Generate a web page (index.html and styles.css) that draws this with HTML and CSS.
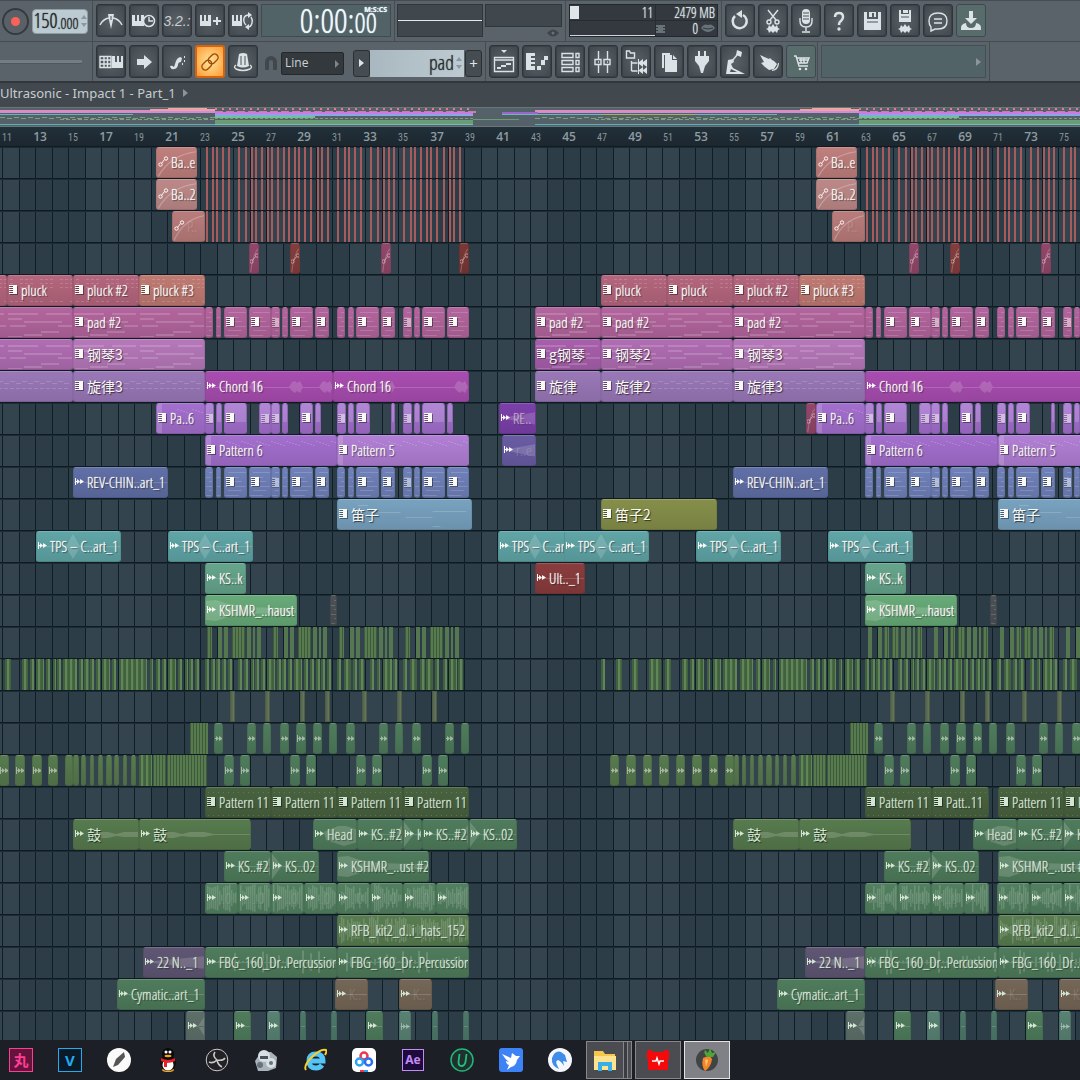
FILE: index.html
```html
<!DOCTYPE html>
<html lang="en">
<head>
<meta charset="utf-8">
<title>Playlist</title>
<link rel="stylesheet" href="styles.css">
</head>
<body>
<svg class="defs" aria-hidden="true">
  <symbol id="midi" viewBox="0 0 9 10"><path fill="#0006" d="M1 1h8v9H1z"/><path fill="currentColor" d="M0 0h8v9H0V8h4V7H0V6h4V5H0V4h4V3H0V2h4V1H0z"/></symbol>
  <symbol id="audio" viewBox="0 0 9 8"><path fill="currentColor" d="M0 0h1v3h1V1l3 2.500L2 6V4H1v3H0zM5 1l4 2.500L5 6z"/></symbol>
  <symbol id="auto" viewBox="0 0 11 11"><path fill="none" stroke="currentColor" d="M3.500 7.500l3-4"/><circle cx="2.500" cy="8.500" r="1.700" fill="none" stroke="currentColor"/><circle cx="8" cy="2.500" r="1.700" fill="none" stroke="currentColor"/></symbol>
</svg>

<header class="toolbar">
  <div class="bar">
    <div class="panel panel-left">
      <button class="record" aria-label="Record"><span class="record-dot"></span></button>
      <output class="tempo" aria-label="Tempo">150<small>.000</small><svg class="spin" viewBox="0 0 6 14"><path d="M3 1l3 4H0zM3 13l3-4H0z"/></svg></output>
    </div>
    <div class="panel">
      <button class="tool" aria-label="Metronome"><svg viewBox="0 0 24 24"><path class="line" d="M1 16q3-6 9-7M23 16q-3-6-9-7"/><path d="M9 5h6l-1 6-2 9-2-9z"/><path class="dark" d="M12 7v4"/></svg></button>
      <button class="tool" aria-label="Wait for input"><svg viewBox="0 0 24 24"><path d="M0 6h3v6h2V6h2v6h2V6h3v11H0z"/><circle class="hole" cx="17" cy="12" r="5.500"/><path class="line" d="M17 8v4h4"/></svg></button>
      <button class="tool tool-count" aria-label="Countdown">3.2.:</button>
      <button class="tool" aria-label="Blend notes"><svg viewBox="0 0 24 24"><path d="M2 6h2v6h2V6h2v6h2V6h3v11H2zM18 8h2v3h3v2h-3v3h-2v-3h-3v-2h3z"/></svg></button>
      <button class="tool" aria-label="Loop record"><svg viewBox="0 0 24 24"><path d="M1 6h2v6h2V6h2v6h2V6h2v11H1zM17 3v6l4-3zM18 21v-6l-4 3z"/><path class="line" d="M18 6q-4 0-5 3-1 4 2 7M20 8q2 3 1 6-1 4-4 4"/></svg></button>
      <div class="clock"><span class="clock-unit">M:S:CS</span><span>0:00:</span><span class="clock-cs">00</span></div>
    </div>
    <div class="panel panel-scopes">
      <div class="scope"></div>
      <div class="scope-side"><div class="scope-small"></div><svg class="eye" viewBox="0 0 12 8"><path d="M0 4q6-7 12 0-6 7-12 0z"/><circle cx="6" cy="4" r="1.500" fill="#667077"/></svg></div>
    </div>
    <div class="panel panel-cpu">
      <div class="monitor">
        <div class="monitor-cell cpu"><span class="cpu-level"></span><span>11</span></div>
        <div class="monitor-cell">2479 MB</div>
        <div class="monitor-cell graph"></div>
        <div class="monitor-cell"><svg class="chip" viewBox="0 0 9 8"><path d="M0 0h9v2H0zM0 3h9v2H0zM0 6h9v2H0zM2 0h5v8H2z"/></svg>0<svg class="lips" viewBox="0 0 14 9"><path d="M0 4q3-5 7-3 4-2 7 3-7 8-14 0z"/><path class="slot" d="M2 4q5 2 10 0"/></svg></div>
      </div>
    </div>
    <div class="panel panel-open">
      <button class="tool" aria-label="Undo"><svg viewBox="0 0 24 24"><path class="thick" d="M7 7a7 7 0 1 0 8-1"/><path d="M14 1v8L8 5z"/></svg></button>
      <button class="tool" aria-label="Cut"><svg viewBox="0 0 24 24"><path class="line" d="M7 1l8 10M17 1L9 11"/><circle class="line" cx="8" cy="13" r="2"/><circle class="line" cx="16" cy="13" r="2"/><path d="M5 20l2-1 1-3 2 2 2-3 2 3 2-2 1 3 2 1-2 1-1 3-2-2-2 2-2-2-2 2-1-3z"/></svg></button>
      <button class="tool" aria-label="Audio recording"><svg viewBox="0 0 24 24"><rect x="8" y="0" width="8" height="15" rx="4"/><path class="line" d="M6 9v3q0 6 6 6t6-6V9M12 18v4M8 23h8"/><path class="dark" d="M9 4h6M9 7h6M9 10h6"/></svg></button>
      <button class="tool" aria-label="Help"><svg viewBox="0 0 24 24"><path class="thick" d="M8 8q0-4 4-4t4 4q0 2-2 4-2 1-2 4"/><circle cx="12" cy="20" r="1.700"/></svg></button>
      <button class="tool" aria-label="Save"><svg viewBox="0 0 24 24"><path d="M4 3h3v7h11V3h3v18H4z"/><path d="M9 3h7v5h-2V4h-2v4H9z"/><path class="dark" d="M7 13h11"/></svg></button>
      <button class="tool" aria-label="Save as wave"><svg viewBox="0 0 24 24"><path d="M6 1h2v4h8V1h2v12H6zM10 1h5v3h-5z"/><path class="dark" d="M8 8h8"/><path d="M5 20l2-1 1-3 2 2 2-3 2 3 2-2 1 3 2 1-2 1-1 3-2-2-2 2-2-2-2 2-1-3z"/></svg></button>
      <button class="tool" aria-label="Messages"><svg viewBox="0 0 24 24"><path class="line" d="M5 18q-2-2-2-6 0-8 9-8t9 8-9 8h-3l-4 2zM8 10h8M8 14h8"/></svg></button>
      <button class="tool tool-teal" aria-label="Download"><svg viewBox="0 0 24 24"><path d="M10 2h4v7h4l-6 6-6-6h4zM2 21q-1-6 5-7 0 5 5 5t5-5q6 1 5 7z"/></svg></button>
    </div>
  </div>
  <div class="bar">
    <div class="panel panel-left panel-pitch"><label class="pitch"><span class="sr">Position</span><input type="range" class="pitch-range"></label></div>
    <div class="panel">
      <button class="tool" aria-label="Typing keyboard"><svg viewBox="0 0 24 24"><path class="line" d="M1 6.500h11v11H1zM1 10h11M1 14h11M5 7v10M8.500 7v10"/><path d="M14 6h2v6h2V6h2v6h2V6h2v12H13V6z"/></svg></button>
      <button class="tool" aria-label="Step edit"><svg viewBox="0 0 24 24"><path d="M5 9h7V5l8 7-8 7v-4H5z"/></svg></button>
      <button class="tool" aria-label="Note slide"><svg viewBox="0 0 24 24"><path d="M5 16q2-1 4 1l2-6q1-3 4-4l2 1-1 4q-3 0-3 3-1 4-4 4-3 1-4-3zM19 6h1v2h-1zM19 10h1v2h-1zM17 13h1v2h-1z"/></svg></button>
      <button class="tool tool-on" aria-label="Link"><svg viewBox="0 0 24 24"><g transform="rotate(-45 12 12)"><rect class="line" x="2" y="8.500" width="11" height="7" rx="3.500"/><rect class="line" x="11" y="8.500" width="11" height="7" rx="3.500"/></g></svg></button>
      <button class="tool" aria-label="Multilink"><svg viewBox="0 0 24 24"><path d="M8 4q4-2 8 0l2 12q-6 3-12 0z"/><path class="line" d="M5 15q-3 2 0 4 7 3 14 0 3-2 0-4"/><path class="dark" d="M10 6v9M14 6v9"/></svg></button>
      <svg class="magnet" viewBox="0 0 12 14"><path d="M0 14V6a6 6 0 0 1 12 0v8H8V6a2 2 0 0 0-4 0v8z"/></svg>
      <label class="snap"><span class="sr">Snap</span><select class="snap-select"><option>Line</option></select><span class="snap-arrow"></span></label>
      <button class="pattern-side" aria-label="Pattern menu"><span class="tri"></span></button>
      <button class="pattern-name">pad<svg class="spin" viewBox="0 0 6 14"><path d="M3 1l3 4H0zM3 13l3-4H0z"/></svg></button>
      <button class="pattern-side" aria-label="Add pattern">+</button>
    </div>
    <div class="panel panel-windows">
      <button class="tool" aria-label="Playlist"><svg viewBox="0 0 24 24"><path d="M9 0h6l-3 3z"/><path class="line" d="M2.500 7.500h19v14h-19zM3 10h18"/><path d="M5 17h4v2H5zM9 15h5v2H9zM14 13h5v2h-5z"/></svg></button>
      <button class="tool" aria-label="Piano roll"><svg viewBox="0 0 24 24"><path d="M1 3h9v3H6v2h4v2H6v2h4v2H6v2h4v4H1zM12 16h4v4h-4zM16 10h4v5h-4zM19 6h4v4h-4z"/></svg></button>
      <button class="tool" aria-label="Channel rack"><svg viewBox="0 0 24 24"><path class="line" d="M4 3.500h11v4H4zM4 10.500h11v4H4zM4 17.500h11v4H4zM18 3.500h3v4h-3zM18 10.500h3v4h-3zM18 17.500h3v4h-3z"/></svg></button>
      <button class="tool" aria-label="Mixer"><svg viewBox="0 0 24 24"><path class="line" d="M7.500 1v8M7.500 15v8M16.500 1v8M16.500 15v8M4 9.500h6v5H4zM13 9.500h6v5h-6zM7 12h1M16 12h1"/></svg></button>
      <button class="tool" aria-label="Browser"><svg viewBox="0 0 24 24"><path class="line" d="M2.500 1v7h8V3h-4l-1-2zM7.500 11v10M7.500 13h6M7.500 21h6"/><path d="M14 9h1v3l4-3v3l4-3v8l-4-3v3l-4-3v3h-1zM14 17h1v3l4-3v3l4-3v7l-4-3v3l-4-3v3h-1z"/></svg></button>
      <button class="tool" aria-label="Project"><svg viewBox="0 0 24 24"><path d="M5 3h8v2H7v13H5z"/><path d="M8 5h7v5h5v12H8zM16 5l4 4h-4z"/></svg></button>
      <button class="tool" aria-label="Plugins"><svg viewBox="0 0 24 24"><path d="M8 1h2v5h4V1h2v5h3v5l-4 5-2 7h-2l-2-7-4-5V6h3z"/></svg></button>
      <button class="tool" aria-label="Tools"><svg viewBox="0 0 24 24"><path d="M14 0l5 2-1 5-5-2zM5 10l5-1 1 3-3 2 2 4 12 6H3zM8 19l-1 3h7z" fill-rule="evenodd"/><path class="line" d="M14 5l-5 6"/></svg></button>
      <button class="tool" aria-label="Touch"><svg viewBox="0 0 24 24"><path d="M4 5l9 4 1-1 2 2 2 1 3 3-3 5-5 1-4-3-4-4 3-1zM16 20q5-1 6-7h1q0 7-7 8z"/></svg></button>
      <button class="tool tool-teal" aria-label="Shop"><svg viewBox="0 0 24 24"><path class="line" d="M5 6h2l3 10h9M8 8h12l-2 5H9M10 10h9M12 8v5M15 8v5"/><circle cx="11" cy="19" r="1.300"/><circle cx="17" cy="19" r="1.300"/></svg></button>
    </div>
    <div class="panel"><button class="news" aria-label="News"><span class="tri"></span></button></div>
  </div>
</header>

<div class="hint">Ultrasonic - Impact 1 - Part_1<span class="tri"></span></div>
<div class="overview"><svg id="overview"></svg></div>
<div class="ruler" id="ruler"></div>
<main class="playlist" id="playlist"></main>

<footer class="taskbar">
  <button class="app" aria-label="Wan"><span class="badge badge-pink">丸</span></button>
  <button class="app" aria-label="Vegas"><span class="badge badge-blue">V</span></button>
  <button class="app" aria-label="Notes"><svg viewBox="0 0 24 24"><circle cx="12" cy="12" r="12" fill="#fafafa"/><path d="M6 19l3-8 8-7 1 5-7 8z" fill="#555"/></svg></button>
  <button class="app" aria-label="QQ"><svg viewBox="0 0 24 24"><ellipse cx="12" cy="22" rx="6" ry="2" fill="#f6a21c"/><ellipse cx="12" cy="15" rx="8" ry="8" fill="#111"/><ellipse cx="12" cy="17" rx="5.500" ry="5.500" fill="#fff"/><ellipse cx="12" cy="6" rx="6" ry="6" fill="#0a0a0a"/><circle cx="10" cy="4" r="1.500" fill="#fff"/><circle cx="14" cy="4" r="1.500" fill="#fff"/><ellipse cx="12" cy="8" rx="3.500" ry="1.200" fill="#f6a21c"/><path d="M5 10q7 4 14 0v3q-4 2-8 2v4H8v-5l-3-1z" fill="#e8202a"/></svg></button>
  <button class="app" aria-label="OBS"><svg viewBox="0 0 24 24"><circle cx="12" cy="12" r="10.800" fill="#222226" stroke="#c8c8c8"/><path fill="none" stroke="#c8c8c8" stroke-width="1.600" d="M10 4q-3 4 2 8 6 1 8-2M12 12q-4 4-8 2M12 12q1 5 5 7"/></svg></button>
  <button class="app" aria-label="Robot"><svg viewBox="0 0 24 24"><path d="M1 13l6-9h10l6 5-1 11-8 3H4z" fill="#a9b3bb"/><circle cx="10" cy="8" r="6" fill="#d9e0e4"/><path d="M6 8h8v3H6z" fill="#4a545c"/><circle cx="17" cy="15" r="5" fill="#d9e0e4"/><circle cx="17" cy="15" r="2" fill="#66727c"/><circle cx="6" cy="17" r="3" fill="#66727c"/></svg></button>
  <button class="app" aria-label="Internet Explorer"><svg viewBox="0 0 24 24"><path fill="none" stroke="#54c4f4" stroke-width="5" d="M5 13h15q0-7-7-7t-7 7 7 7q4 0 6-3"/><path fill="none" stroke="#f7cf2f" stroke-width="2" d="M3 22q-3-4 6-13T23 2q1 2-1 5"/></svg></button>
  <button class="app" aria-label="Cloud drive"><svg viewBox="0 0 24 24"><rect width="24" height="24" rx="5" fill="#fff"/><g fill="none" stroke-width="2.500"><circle cx="12" cy="8" r="3.500" stroke="#f0364b"/><circle cx="7.500" cy="14" r="3.500" stroke="#2aa3f5"/><circle cx="16.500" cy="14" r="3.500" stroke="#2a70f5"/></g><path d="M8 22h4v2H8z" fill="#f0364b"/><path d="M12 22h4v2h-4z" fill="#2a9af5"/></svg></button>
  <button class="app" aria-label="After Effects"><span class="badge badge-ae">Ae</span></button>
  <button class="app" aria-label="Uninstaller"><svg viewBox="0 0 24 24"><circle cx="12" cy="12" r="11" fill="#20302f" stroke="#20b877" stroke-width="1.500"/><path fill="none" stroke="#20c07c" stroke-width="1.800" d="M9.500 6l-1 8q0 4 3 4t4-4l1-8"/></svg></button>
  <button class="app" aria-label="Bird"><svg viewBox="0 0 24 24"><rect width="24" height="24" rx="3" fill="#3d83f5"/><path fill="#fff" d="M3 6l9 4 1-5 4 3 4 0-3 4q-1 6-6 7l-4 3 2-5q-3-1-3-4l3 1q-4-3-7-8z"/></svg></button>
  <button class="app" aria-label="Thunder"><svg viewBox="0 0 24 24"><circle cx="12" cy="12" r="12" fill="#f4f7fb"/><path fill="#3f8de8" d="M4 10Q7 2 13 4l4 3 2 7-4-1 1 5q-3-5-6-6-3 1-1 5l2 4Q3 18 4 10z"/></svg></button>
  <button class="app app-open app-stack" aria-label="Explorer"><svg viewBox="0 0 24 24"><path d="M1 3h9l2 3h10v16H1z" fill="#f5c84c"/><path d="M1 8h22v14H1z" fill="#fde28f"/><path d="M5 14h14v9h-4v-5H9v5H5z" fill="#35aeea"/></svg></button>
  <button class="app app-open" aria-label="Heart"><svg viewBox="0 0 24 24"><path d="M1 3q4-3 6 1h10q2-4 6-1v7l-1 3v9H2v-9l-1-3z" fill="#f40a0a"/><path d="M6 13h4l1-3 2 6 1-3h4" fill="none" stroke="#fff" stroke-width="1.500"/></svg></button>
  <button class="app app-open app-active" aria-label="FL Studio"><svg viewBox="0 0 24 24"><circle cx="12" cy="12" r="11" fill="#3f4444"/><path d="M8 10q7-4 9 1-1 8-7 12-4-5-2-13z" fill="#f5842a"/><path d="M10 12q3-2 3 1l-2 6z" fill="#ffc06a"/><path d="M12 9Q8 5 10 2l3 3 2-5 2 5 4-1-3 5z" fill="#4ea53a"/></svg></button>
</footer>
<script src="script.js"></script>
</body>
</html>
```

FILE: styles.css
```css
* { box-sizing: border-box; }
body {
  margin: 0;
  min-height: 100vh;
  display: flex;
  flex-direction: column;
  overflow-x: hidden;
  background: #1d1f26;
  color: #dfe6e9;
  font: 12px/16px "Noto Sans", "Noto Sans CJK SC", sans-serif;
}
button { margin: 0; padding: 0; border: 0; font: inherit; color: inherit; background: none; }
.defs { position: absolute; width: 0; height: 0; }
.sr { position: absolute; width: 1px; height: 1px; overflow: hidden; opacity: 0; }

/* toolbar */
.toolbar { background: #5a636a; border-top: 1px solid #454c52; border-bottom: 2px solid #31373c; }
.bar { display: flex; height: 41px; overflow: hidden; border-bottom: 1px solid #454c52; }
.bar:last-child { height: 39px; border-bottom: 0; }
.panel { display: flex; flex: none; gap: 3px; padding: 3px 3px 0; border-right: 1px solid #454c52; }
.panel-left { width: 93px; padding: 0 4px 0 2px; align-items: center; }
.panel-open { border-right: 0; }
.panel-windows { padding-right: 1px; }
.tool {
  width: 30px; height: 33px; flex: none;
  display: grid; place-items: center;
  border: 1px solid #2f3539; border-radius: 3px;
  background: radial-gradient(#596167, #40474c);
  box-shadow: inset 0 0 0 1px #3a4146;
}
.tool svg { width: 24px; height: 24px; fill: #dce3e6; }
.tool svg .line { fill: none; stroke: #dce3e6; stroke-width: 1.400; }
.tool svg .thick { fill: none; stroke: #dce3e6; stroke-width: 2.500; }
.tool svg .hole { fill: #4c545a; stroke: #dce3e6; stroke-width: 1.500; }
.tool svg .dark { fill: none; stroke: #4c545a; }
.tool-count { font: italic 14px/20px "Liberation Sans", sans-serif; color: #c9d0d3; }
.tool-teal { background: #586c6c; border-color: #3c4a4d; box-shadow: none; }
.tool-on { background: radial-gradient(#ffe79b, #ff9a35); border: 2px solid #d8630f; box-shadow: none; }
.tool-on svg .line { stroke: #a04a08; }
.record { width: 27px; height: 27px; flex: none; display: grid; place-items: center; border: 2px solid #343a3f; border-radius: 50%; background: #596167; }
.record-dot { width: 9px; height: 9px; border-radius: 50%; background: #f9625b; }
.tempo {
  display: flex; align-items: center; justify-content: center; width: 56px; height: 25px;
  border: 1px solid #8e9ca3; border-radius: 4px; background: #bccad1; color: #26292c;
  font: 20px/24px "Open Sans Condensed Light", "Roboto Condensed", sans-serif;
  text-shadow: 0 0 1px;
}
.tempo small { font-size: 15px; padding-top: 3px; }
.spin { width: 6px; height: 14px; margin-left: 2px; fill: #8a979d; }
.clock {
  position: relative; width: 130px; height: 33px; padding: 0 13px 2px 0;
  display: flex; align-items: center; justify-content: flex-end;
  border: 1px solid #3e4b4f; background: #516367; color: #eef8fa;
  font: 34px/32px "Open Sans Condensed Light", "Roboto Condensed", sans-serif;
  text-shadow: 0 0 1px;
}
.clock-cs { font-size: 28px; line-height: 26px; padding-top: 5px; }
.clock-unit { position: absolute; right: 3px; top: 1px; font: bold 7px/8px "Open Sans", sans-serif; }
.panel-scopes { gap: 2px; padding-left: 2px; }
.scope { width: 86px; height: 33px; border: 1px solid #30363a; background: linear-gradient(#e3e8ea, #e3e8ea) 0 15px / 100% 1px no-repeat #40474d; }
.scope-small { width: 77px; height: 23px; border: 1px solid #30363a; background: #40474d; }
.scope-side { display: flex; flex-direction: column; align-items: flex-end; gap: 2px; }
.eye { width: 12px; height: 8px; margin-right: 3px; fill: #3d454b; }
.monitor {
  width: 149px; height: 33px; display: grid; grid-template: 15px 15px / 85px 1fr; gap: 1px;
  border: 1px solid #23282b; background: #262c30;
  font: 14px/15px "Open Sans Condensed Light", "Roboto Condensed", sans-serif;
  text-shadow: 0 0 1px;
}
.monitor-cell { display: flex; align-items: center; justify-content: flex-end; gap: 3px; padding-right: 2px; background: #33393e; }
.cpu { justify-content: space-between; }
.cpu-level { width: 9px; height: 13px; background: #dfe5e8; }
.graph { border-bottom: 1px solid #cfd6d9; }
.chip { width: 9px; height: 8px; margin-right: auto; fill: #687279; }
.lips { width: 14px; height: 9px; fill: #687279; }
.slot { fill: none; stroke: #33393e; }
.pitch { width: 84px; margin-left: -2px; display: flex; }
.pitch-range { appearance: none; width: 82px; height: 4px; margin: 0; background: #747d84; border-bottom: 1px solid #4e575d; }
.pitch-range::-webkit-slider-thumb { appearance: none; width: 0; height: 0; }
.magnet { width: 12px; height: 14px; align-self: center; margin-left: 4px; fill: #41484d; }
.snap { position: relative; align-self: center; margin: 0 6px 0 1px; }
.snap-select {
  appearance: none; display: block; width: 63px; height: 23px; padding: 0 3px;
  border: 1px solid #24282b; border-radius: 2px; background: #33393d; color: #cbd2d5; font: 12px/20px "Open Sans", sans-serif;
}
.snap-arrow { position: absolute; right: 5px; top: 8px; border: 4px solid transparent; border-left-color: #7d868b; border-right: 0; }
.tri { border: 4px solid transparent; border-left: 5px solid #8b959a; border-right: 0; }
.pattern-side { width: 17px; height: 27px; align-self: center; display: grid; place-items: center; border: 1px solid #2b3034; border-radius: 3px; background: #454c52; font-size: 15px; }
.pattern-side .tri { border-left-color: #dfe5e8; }
.pattern-name {
  width: 94px; height: 27px; align-self: center; margin: 0 -2px 0 -3px; padding-right: 2px;
  display: flex; align-items: center; justify-content: flex-end;
  background: linear-gradient(90deg, #a9b8c0, #bdcad1); color: #2a2d30;
  font: 20px/24px "Open Sans Condensed Light", "Roboto Condensed", sans-serif;
  text-shadow: 0 0 1px;
}
.news { width: 165px; height: 33px; padding-right: 4px; display: flex; align-items: center; justify-content: flex-end; border: 1px solid #425054; background: #516367; }

/* hint, overview and ruler */
.hint { display: flex; align-items: center; gap: 7px; height: 24px; padding-bottom: 4px; background: #41484e; color: #c6cdd0; font-size: 13px; }
.overview { height: 20px; border: solid #6a757b; border-width: 1px 0; background: #556168; overflow: hidden; }
.overview svg { display: block; width: 100%; height: 18px; }
.ruler { position: relative; height: 19px; overflow: hidden; background: linear-gradient(#223039, #1c272f); color: #87949a; }
.mark { position: absolute; top: 3px; width: 30px; margin-left: -15px; text-align: center; font: 10px/16px "Roboto Condensed", sans-serif; }
.mark-major { top: 2px; font: 600 12px/16px "Open Sans", sans-serif; color: #8f9ca2; }

/* playlist */
.playlist {
  position: relative; flex: 1 0 auto; overflow: hidden;
  background:
    linear-gradient(#0f1b23 0 1px, #1d2b35 0 2px, transparent 0) 0 0 / 100% 32px,
    linear-gradient(90deg, #0f1d26 0 1px, transparent 0 17px, #0f1d26 0 18px, transparent 0) 2px 0 / 33px 100%,
    linear-gradient(90deg, #2d3d48 0 66px, #34444e 0) 19px 0 / 132px 100%;
}
.track { position: relative; height: 32px; overflow: hidden; }
.track:last-child { height: 30px; }
.clip {
  position: absolute; top: 1px; height: 31px; overflow: hidden;
  display: flex; align-items: center; gap: 3px; padding: 0 1px 2px;
  border: 1px solid; border-radius: 3px;
  color: #f8f8f5; white-space: nowrap;
  font: 14px/28px "Open Sans Condensed Light", "Roboto Condensed", "Noto Sans CJK SC", sans-serif;
  text-shadow: 0 0 1px, 1px 1px 1px #0009;
}
.clip-auto { gap: 2px; }
.clip-dim { color: #d3e6d4; }
.clip-tiny { padding: 0; justify-content: center; }
.clip .icon { position: relative; flex: none; width: 9px; height: 10px; }
.clip-auto .icon { width: 11px; height: 11px; }
.clip .label { position: relative; font-size: 15px; }
.clip .cjk { font: 14px/28px "Noto Sans CJK SC", sans-serif; text-shadow: 1px 1px 1px #0009; }
.clip .faint { opacity: 0.150; }
.clip .soft { opacity: 0.500; }
.clip-tiny .icon { opacity: 0.500; }
.art { position: absolute; left: 0; top: 0; width: 100%; height: 100%; }
.stripe { position: absolute; top: 1px; height: 31px; }
.stripe-red { background: #a65c5c; }
.stripe-hat { background: #55774f; }
.stripe-fine { background: repeating-linear-gradient(90deg, #3d5a3b 0 1px, #577a4f 0 3px); }
.stripe-kick { background: repeating-linear-gradient(90deg, #41603e 0 2px, #5f8558 0 4px, #48693f 0 5px); }
.stripe-olive { background: linear-gradient(90deg, #546351, #65785b); border: 1px solid #4f5d42; }

/* taskbar */
.taskbar { display: flex; flex: none; gap: 3px; height: 40px; padding: 1px 0; margin-left: -2px; background: #1d1f26; }
.app { width: 46px; height: 38px; flex: none; display: grid; place-items: center; }
.app svg { width: 24px; height: 24px; }
.app-open { border: 1px solid #85878b; background: #4b4c52; }
.app-stack { box-shadow: inset -3px 0 #4b4c52, inset -4px 0 #85878b, inset -7px 0 #3b3c42, inset -8px 0 #85878b; padding-right: 8px; }
.app-active { background: #808187; border-color: #e2e2e4; }
.badge { width: 24px; height: 24px; display: grid; place-items: center; border: 1px solid; font: bold 15px/20px "Noto Sans", "Noto Sans CJK SC", sans-serif; }
.badge-pink { background: #64143c; color: #ff3d94; }
.badge-blue { background: #0a1a26; color: #25a9ef; }
.badge-ae { width: 22px; height: 22px; background: #1f0a3c; color: #c08cf5; font-size: 12px; }
```

FILE: script.js
```js
const SVG = 'http://www.w3.org/2000/svg';
const playlist = document.getElementById('playlist');
const tracks = [];
for (let i = 0; i < 28; i++) {
  const t = document.createElement('div');
  t.className = 'track';
  playlist.append(t);
  tracks.push(t);
}

// small repeatable generator, so that every clip keeps the same artwork
function noise(seed) {
  let s = seed * 7919 + 17;
  return () => (s = (s * 16807) % 2147483647) / 2147483647;
}

const ART = {
  pad(w) {
    let d = '';
    for (let x = 0; x < w; x += 66) {
      [[0, 5, 30], [38, 5, 24], [0, 10, 14], [16, 13, 38], [2, 17, 16], [33, 23, 18], [50, 17, 14], [16, 26, 18], [0, 28, 14]]
        .forEach(([a, y, l]) => { const n = Math.min(l, w - x - a); if (n > 0) d += `M${x + a} ${y}h${n}v2h-${n}z`; });
    }
    return d;
  },
  chop(w) {
    return [4, 9, 13, 18, 22, 27].map((y, i) => `M${i % 2 ? 0 : 3} ${y}h${w * (i % 3 ? 0.6 : 0.9)}v1H${i % 2 ? 0 : 3}z`).join('');
  },
  bright(w) { return `M0 0h${w}v18H0z`; },
  pluck(w) {
    let d = '';
    for (let x = 2; x < w - 2; x += 5) for (const y of [3, 7, 11, 25]) if ((x * 3 + y) % 4) d += `M${x} ${y}h3v1h-3z`;
    return d;
  },
  melody(w) {
    let d = '';
    for (let x = 50; x < w - 4; x += 6) d += `M${x} ${9 + (x * 5) % 4}h5v1h-5zM${x} ${14 + (x * 7) % 3}h4v1h-4z`;
    return d;
  },
  notes(w) {
    let d = 'M0 0h5v30H0z';
    for (let x = 14; x < w - 2; x += 3) d += `M${x} ${5 + (x * 7) % 5}h2v1h-2z`;
    return d;
  },
  flute(w) {
    return `M${w * 0.3} 12h22v1h-22zM${w * 0.5} 17h${w * 0.2}v1h-${w * 0.2}zM${w * 0.7} 11h${w * 0.25}v1h-${w * 0.25}zM20 5h10v1h-10zM${w * 0.7} 26h8v1h-8z`;
  },
  line(w) { return `M0 14h${w}v1H0z`; },
  burst(w) { return `M0 14h29l7-12 7 12h${w}v1H43l-7 12-7-12H0z`; },
  blobs(w) {
    let d = `M0 15h${w}v1H0z`;
    for (const c of [50, 90, 120]) d += `M${c - 7} 15l3-5 3-1 2 2 3-2 3 6-3 6-3-2-2 2-3-2z`;
    return d;
  },
  blobsLate(w) {
    let d = `M0 15h${w}v1H0z`;
    for (const c of [54, 127]) d += `M${c - 7} 15l3-5 3-1 2 2 3-2 3 6-3 6-3-2-2 2-3-2z`;
    return d;
  },
  fall(w) { return `M0 5l10-1 12 4 20 3 ${w} 3v2L42 18l-20 3-12 4-10-1z`; },
  rise(w) { return `M0 14L${w} 8v13z`; },
  coneIn(w) { return `M0 2l10 12L0 27zM0 14h${w}v1H0z`; },
  coneOut(w) { return `M${w} 2L${w - 8} 14l8 13zM0 14h${w}v1H0z`; },
  head() { return `M10 12l14-6h8l12 4v12l-14 4-18-6z`; },
  drum(w) { return `M24 12h10l8 2 8-2h14l10 2h${w}v1H74l-10 2H50l-8-1-8 2H24z`; },
  dense(w, r) {
    let d = '';
    for (let x = 1; x < w; x += 2) { const h = 3 + r() * 11; d += `M${x} ${14 - h}h1.500v${2 * h}h-1.500z`; }
    return d;
  },
  perc(w, r) {
    let d = `M0 14h${w}v1H0z`;
    for (let x = 4; x < w; x += 4) { const h = r() ** 3 * 12 + 1; d += `M${x} ${14 - h}h2v${2 * h}h-2z`; }
    return d;
  },
  steps(w) {
    let d = '';
    for (let x = 2; x < w; x += 5) d += `M${x} 4h1v1h-1zM${x} 27h1v1h-1z`;
    return d;
  },
  curve(w) { return `M0 29Q${w / 3} 5 ${w} 3v1Q${w / 3} 7 1 30z`; }
};

let count = 0;
function clip(row, x, end, color, icon, text, art, tone) {
  const w = end - x;
  const el = document.createElement('div');
  el.className = 'clip clip-' + icon + (w < 13 ? ' clip-tiny' : '') + (row > 19 ? ' clip-dim' : '');
  el.style.left = x + 'px';
  el.style.width = w + 'px';
  el.style.background = `linear-gradient(${color}, color-mix(in srgb, ${color} 90%, #000))`;
  el.style.borderColor = `color-mix(in srgb, ${color} 84%, #fff) color-mix(in srgb, ${color} 88%, #000) color-mix(in srgb, ${color} 80%, #000)`;
  if (art) {
    const alpha = art === 'curve' ? 0.25 : 0.16;
    el.innerHTML = `<svg class="art"><path fill="#fff" fill-opacity="${alpha}" d="${ART[art](w, noise(++count))}"/></svg>`;
  }
  if (icon !== 'none' && w > 8) {
    el.innerHTML += `<svg class="icon"><use href="#${icon}"/></svg>`;
  }
  if (text) {
    const s = document.createElement('span');
    s.className = 'label' + (tone ? ' ' + tone : '') + (/[\u4e00-\u9fff]/.test(text) ? ' cjk' : '');
    s.textContent = text;
    el.append(s);
  }
  tracks[row].append(el);
}
function stripe(row, x, end, kind) {
  const el = document.createElement('div');
  el.className = 'stripe stripe-' + kind;
  el.style.left = x + 'px';
  el.style.width = end - x + 'px';
  tracks[row].append(el);
}

const PAD = '#b3659d', PLUCK = '#b4667d', VIOLET = '#a36fce', BLUE = '#7081ba', TEAL = '#60a5a7';
const GREEN = '#4f7c5c', MOSS = '#577a4e', SAND = '#756757';
const SPIKES = [206, 212, 216, 222, 228, 238, 245, 251, 255, 261, 267, 271, 277, 283, 288, 294, 298, 304, 310, 317, 321, 327,
  337, 344, 348, 354, 360, 370, 377, 383, 388, 393, 403, 410, 414, 420, 426, 430, 436, 443, 449, 453, 459];
const CHOPS = [[205, 213], [216, 221], [224, 247], [249, 271], [271, 280], [282, 288], [290, 313], [315, 329], [337, 345], [348, 354],
  [356, 379], [381, 395], [403, 412], [414, 420], [422, 445], [447, 469]];
const GAPPED = [[205, 214], [216, 222], [224, 247], [259, 271], [271, 280], [282, 288], [300, 313], [315, 321], [337, 346], [348, 354],
  [356, 370], [391, 395], [403, 412], [414, 420], [422, 445], [447, 453]];
const KICKS = [[205, 209], [211, 215], [216, 220], [222, 226], [228, 232], [238, 242], [244, 248], [251, 254], [255, 259], [261, 265],
  [267, 275], [277, 281], [282, 286], [288, 292], [294, 302], [304, 308], [310, 314], [316, 320], [321, 325], [327, 331],
  [337, 341], [344, 351], [353, 357], [359, 364], [370, 374], [377, 380], [383, 392], [393, 397], [403, 407], [410, 417],
  [420, 425], [426, 433], [435, 439], [443, 447], [449, 457], [458, 463]];
const SNARES = [[214, 223], [247, 256], [263, 271], [280, 289], [296, 306], [313, 322], [329, 337], [346, 355], [379, 388],
  [395, 403], [412, 421], [445, 454], [461, 469]];

for (const o of [0, 660]) {
  clip(0, 156 + o, 197 + o, '#bf7f7d', 'auto', 'Ba..e', 'curve');
  clip(1, 156 + o, 197 + o, '#bd8988', 'auto', 'Ba..2', 'curve');
  clip(2, 172 + o, 205 + o, '#b97c7b', 'auto', 'P..', 'curve', 'faint');
  for (const r of [0, 1, 2]) SPIKES.forEach(x => stripe(r, x + o, x + 2 + o, 'red'));
  [[249, '#93476a'], [290, '#833e3d'], [381, '#93476a'], [459, '#7a3735']].forEach(([x, c]) => clip(3, x + o, x + 10 + o, c, 'auto', '', 'curve'));
  clip(4, 73 + o, 139 + o, PLUCK, 'midi', 'pluck #2', 'pluck');
  clip(4, 139 + o, 205 + o, '#bf7a72', 'midi', 'pluck #3', 'pluck');
  clip(5, 73 + o, 205 + o, PAD, 'midi', 'pad #2', 'pad');
  CHOPS.forEach(([a, b]) => { clip(5, a + o, b + o, PAD, 'midi', '', 'chop'); clip(10, a + o, b + o, BLUE, 'midi', '', 'chop'); });
  clip(6, 73 + o, 205 + o, '#b678ba', 'midi', '钢琴3', 'pad');
  clip(7, 73 + o, 205 + o, '#9a78b8', 'midi', '旋律3', 'melody');
  clip(8, 156 + o, 205 + o, VIOLET, 'midi', 'Pa..6', 'notes');
  GAPPED.forEach(([a, b]) => clip(8, a + o, b + o, VIOLET, b - a > 8 ? 'midi' : 'none', '', 'bright'));
  const p = o ? 338 : 337;
  clip(9, 205 + o, p + o, VIOLET, 'midi', 'Pattern 6', 'notes');
  clip(9, p + o, 469 + o, '#b17fd5', 'midi', 'Pattern 5', 'notes');
  clip(10, 73 + o, 168 + o, '#606fa6', 'audio', 'REV-CHIN..art_1', 'line');
  clip(11, p + o, 472 + o, '#78a2c0', 'midi', '笛子', 'flute');
  clip(13, 205 + o, 246 + o, '#66a58c', 'audio', 'KS..k', 'line');
  clip(14, 205 + o, 297 + o, '#67aa78', 'audio', 'KSHMR_..haust', 'fall');
  clip(14, 330 + o, 337 + o, '#4c5155', 'none', '', 'chop');
  KICKS.forEach(([a, b]) => stripe(16, a + o, b + o, 'kick'));
  [230, 265, 300, 325, 362, 397, 432].forEach(x => stripe(17, x + o, x + 5 + o, 'olive'));
  stripe(18, 190 + o, 208 + o, 'fine');
  SNARES.forEach(([a, b]) => clip(18, a + o, b + o, GREEN, 'audio', ''));
  [224, 240, 290, 306, 356, 372, 422, 438].forEach(x => clip(19, x + o, x + 10 + o, GREEN, 'audio', ''));
  clip(21, 73 + o, 139 + o, MOSS, 'audio', '鼓', 'drum');
  clip(21, 139 + o, 251 + o, MOSS, 'audio', '鼓', 'drum');
  clip(21, 313 + o, 357 + o, GREEN, 'audio', 'Head', 'head');
  clip(21, 357 + o, 403 + o, GREEN, 'audio', 'KS..#2', 'coneOut');
  clip(21, 403 + o, 422 + o, GREEN, 'audio', 'K', 'coneIn');
  clip(21, 422 + o, 469 + o, GREEN, 'audio', 'KS..#2', 'coneOut');
  clip(22, 224 + o, 271 + o, GREEN, 'audio', 'KS..#2', 'coneOut');
  clip(22, 271 + o, 319 + o, GREEN, 'audio', 'KS..02', 'coneIn');
  clip(22, p + o, 429 + o, GREEN, 'audio', 'KSHMR_..ust #2', 'fall');
  [205, 238, 271, 304, 337, 370, 403, 436].forEach(x => clip(23, x + o, (o && x === 304 ? 329 : x + 33) + o, '#52805f', 'audio', o && x === 304 ? '' : '..0', 'dense', 'faint'));
  clip(24, p + o, 469 + o, '#587d50', 'audio', 'RFB_kit2_d..i_hats_152', 'dense');
  clip(25, (o ? 145 : 143) + o, 205 + o, '#5f5674', 'audio', '22 N.._1', 'rise');
  clip(25, 205 + o, p + o, GREEN, 'audio', 'FBG_160_Dr..Percussion', 'perc');
  clip(25, p + o, 469 + o, GREEN, 'audio', 'FBG_160_Dr..Percussion', 'perc');
  clip(26, 117 + o, 205 + o, GREEN, 'audio', 'Cymatic..art_1', 'line');
  clip(26, 335 + o, 368 + o, SAND, 'audio', 'K..', 'line', 'faint');
  clip(26, 399 + o, 432 + o, SAND, 'audio', 'K..', 'line', 'faint');
  clip(27, 186 + o, 205 + o, '#5d6f69', 'audio', '', 'coneOut');
  [[234, 251, GREEN], [267, 280, '#588273'], [300, 306, '#4d7869'], [331, 337, '#4d7869'], [366, 383, GREEN], [399, 411, '#588273'], [432, 438, '#4d7869'], [463, 469, '#4d7869']]
    .forEach(([a, b, c]) => clip(27, a + o, b + o, c, 'audio', '', 'line'));
}

// first section only
clip(4, -59, 7, PLUCK, 'midi', '', 'pluck');
clip(4, 7, 73, PLUCK, 'midi', 'pluck', 'pluck');
clip(5, -59, 73, PAD, 'midi', '', 'pad');
clip(6, -59, 73, '#b06db3', 'midi', '', 'pad');
clip(7, -59, 73, '#9a78b8', 'midi', '', 'melody');
clip(7, 205, 333, '#a94db1', 'audio', 'Chord 16', 'blobs');
clip(7, 333, 469, '#a94db1', 'audio', 'Chord 16', 'blobsLate');
clip(8, 499, 536, '#7b40aa', 'audio', 'RE..', 'rise', 'soft');
clip(9, 502, 536, '#6a5ca4', 'audio', 'r..e', 'rise', 'faint');
[36, 168, 498, 564, 696, 828].forEach(x => clip(12, x, x + 85, TEAL, 'audio', 'TPS – C..art_1', 'burst'));
[205, 271, 337, 403].forEach(x => clip(20, x, x + 66, '#48623f', 'midi', 'Pattern 11', 'steps'));
clip(21, 469, 517, GREEN, 'audio', 'KS..02', 'coneIn');
for (let x = 205; x < 460; x += 66) {
  [[2, 7, 'fine'], [13, 17, 'hat'], [19, 23, 'hat'], [27, 40, 'fine'], [42, 46, 'hat'], [48, 50, 'hat'], [52, 56, 'hat']]
    .forEach(([a, b, k]) => stripe(15, x + a, x + b, k));
}
[[0, 1], [5, 11], [22, 28], [30, 34], [36, 44], [46, 50], [53, 56], [57, 61], [63, 77], [79, 83], [84, 89], [90, 94], [96, 100], [102, 110],
  [112, 116], [119, 147], [150, 153], [156, 160], [162, 166], [168, 176], [178, 182], [185, 188], [189, 193], [195, 199]]
  .forEach(([a, b]) => stripe(16, a, b, 'kick'));
[[-1, 9], [15, 25], [32, 42], [48, 58], [65, 73], [73, 79], [81, 86], [90, 94], [98, 103], [106, 112], [114, 119], [123, 127], [131, 136]]
  .forEach(([a, b]) => clip(19, a, b, MOSS, 'audio', ''));
stripe(19, 139, 152, 'kick'); stripe(19, 153, 166, 'fine'); stripe(19, 167, 207, 'fine');

// second section only
clip(4, 601, 667, PLUCK, 'midi', 'pluck', 'pluck');
clip(4, 667, 733, PLUCK, 'midi', 'pluck', 'pluck');
clip(5, 535, 601, PAD, 'midi', 'pad #2', 'pad');
clip(5, 601, 733, PAD, 'midi', 'pad #2', 'pad');
clip(6, 535, 601, '#a85fac', 'midi', 'g钢琴', 'pad');
clip(6, 601, 733, '#b06db3', 'midi', '钢琴2', 'pad');
clip(7, 535, 601, '#9a78b8', 'midi', '旋律', '');
clip(7, 601, 733, '#9a78b8', 'midi', '旋律2', 'melody');
clip(7, 865, 1129, '#a94db1', 'audio', 'Chord 16', 'blobs');
clip(8, 806, 816, '#93476a', 'auto', '', 'curve');
clip(11, 601, 717, '#858f4a', 'midi', '笛子2', '');
clip(13, 535, 585, '#8a3c3d', 'audio', 'Ult.._1', 'line');
[[865, 932, 'Pattern 11'], [932, 989, 'Patt..11'], [998, 1064, 'Pattern 11'], [1064, 1130, 'Pattern 11']]
  .forEach(([a, b, t]) => clip(20, a, b, '#48623f', 'midi', t, 'steps'));
for (let x = 865; x < 1080; x += 66) {
  [[3, 7, 'hat'], [13, 17, 'hat'], [19, 24, 'fine'], [27, 34, 'fine'], [36, 40, 'hat'], [42, 46, 'hat'], [48, 50, 'hat'], [52, 57, 'fine']]
    .forEach(([a, b, k]) => stripe(15, x + a, x + b, k));
}
[[601, 605], [616, 622], [632, 638], [649, 661], [665, 671], [682, 688], [690, 694], [696, 704], [707, 710], [713, 721], [723, 737],
  [740, 753], [756, 760], [762, 770], [773, 776], [779, 807], [810, 814], [816, 820], [822, 826], [828, 836], [839, 842], [845, 853], [855, 860]]
  .forEach(([a, b]) => stripe(16, a, b, 'kick'));
[[610, 619], [626, 636], [643, 652], [659, 669], [676, 685], [692, 702], [709, 718], [725, 734], [734, 739], [742, 746], [750, 754],
  [758, 763], [766, 772], [775, 779], [783, 787], [791, 796]]
  .forEach(([a, b]) => clip(19, a, b, MOSS, 'audio', ''));
stripe(19, 799, 812, 'kick'); stripe(19, 813, 826, 'fine'); stripe(19, 827, 867, 'fine');

// bar numbers, every second bar
const ruler = document.getElementById('ruler');
for (let n = 11; n < 76; n += 2) {
  const m = document.createElement('span');
  m.className = n % 4 === 1 ? 'mark mark-major' : 'mark';
  m.textContent = n;
  m.style.left = Math.round(7 + (n - 11) * 16.52) + 'px';
  ruler.append(m);
}

// overview strip
const overview = document.getElementById('overview');
function band(x, end, y, h, fill) {
  const r = document.createElementNS(SVG, 'rect');
  r.setAttribute('x', x); r.setAttribute('y', y);
  r.setAttribute('width', end - x); r.setAttribute('height', h);
  r.setAttribute('fill', fill);
  overview.append(r);
}
for (const o of [0, 644]) {
  const s = o ? 535 : 0, e = o ? 859 : 215;
  band(s, e, 2, 1, '#f08aa0');
  band(s, e, 3, 2, '#c78fdd');
  band(o ? 812 : 168, e - 8, 0, 1, '#f0a8a4');
  band(o ? 800 : 150, e, 1, 2, '#f2a0a4');
  band(s, o ? 777 : 133, 6, 1, '#6fb3b5');
  for (let x = s; x < e; x += 7) band(x, x + 5, 9 + (x % 2), 1, '#7ba37b');
  for (let x = s + 60; x < e; x += 6) band(x, x + 4, 11, 1, '#7ba37b');
  band(s, e, 16, 1, '#57b3b8');
  const a = e, b = o ? 1080 : 473;
  for (let x = a; x < b; x += 7) band(x, x + 2, 0, 2, '#e08084');
  for (let x = a; x < b; x += 11) band(x, x + 8, 3, 2, '#cf78b8');
  band(a, b, 4, 2, '#cf7ae0');
  band(a, b, 6, 2, '#8aa6e4');
  band(a, a + 100, 8, 2, '#74c096');
  for (let x = a; x < b; x += 5) band(x, x + 3, 10, 1, '#76a274');
  band(a, b, 12, 4, '#6a9c76');
  band(a, b, 16, 1, '#72c0ba');
}
band(502, 538, 4, 2, '#9a66cc');
band(502, 720, 6, 1, '#70b4bc');
band(602, 695, 6, 1, '#a8b25e');
band(473, 519, 11, 1, '#6a9c76');
```
